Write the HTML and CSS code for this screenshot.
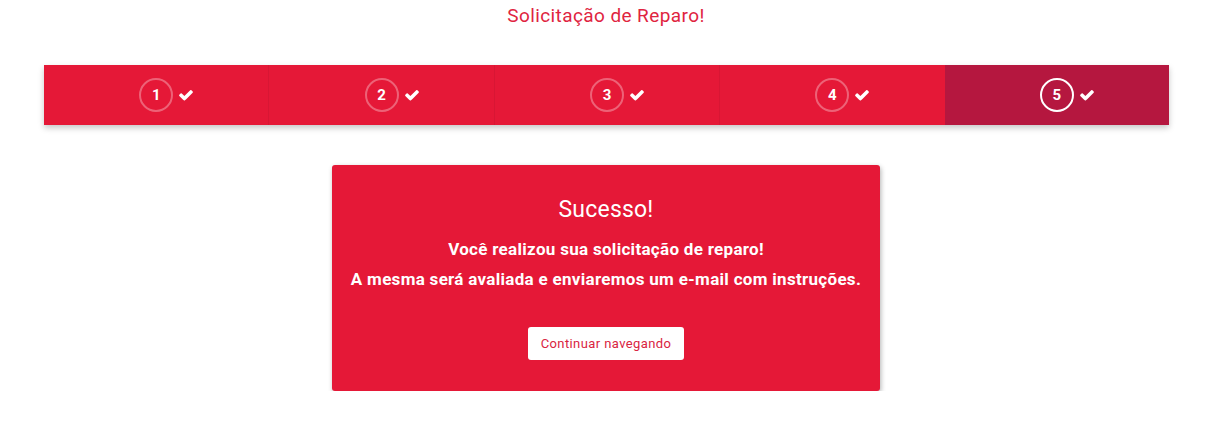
FILE: index.html
```html
<!DOCTYPE html>
<html lang="pt">
<head>
<meta charset="utf-8">
<link rel="stylesheet" href="styles.css">
</head>
<body>
<div class="page">
<h1 class="page-title">Solicitação de Reparo!</h1>
<div class="stepper">
  <div class="step done"><span class="num">1</span><svg class="check" viewBox="0 0 1792 1792"><path d="M1671 566q0 40-28 68l-724 724-136 136q-28 28-68 28t-68-28l-136-136-362-362q-28-28-28-68t28-68l136-136q28-28 68-28t68 28l294 295 656-657q28-28 68-28t68 28l136 136q28 28 28 68z"/></svg></div>
  <div class="step done"><span class="num">2</span><svg class="check" viewBox="0 0 1792 1792"><path d="M1671 566q0 40-28 68l-724 724-136 136q-28 28-68 28t-68-28l-136-136-362-362q-28-28-28-68t28-68l136-136q28-28 68-28t68 28l294 295 656-657q28-28 68-28t68 28l136 136q28 28 28 68z"/></svg></div>
  <div class="step done"><span class="num">3</span><svg class="check" viewBox="0 0 1792 1792"><path d="M1671 566q0 40-28 68l-724 724-136 136q-28 28-68 28t-68-28l-136-136-362-362q-28-28-28-68t28-68l136-136q28-28 68-28t68 28l294 295 656-657q28-28 68-28t68 28l136 136q28 28 28 68z"/></svg></div>
  <div class="step done"><span class="num">4</span><svg class="check" viewBox="0 0 1792 1792"><path d="M1671 566q0 40-28 68l-724 724-136 136q-28 28-68 28t-68-28l-136-136-362-362q-28-28-28-68t28-68l136-136q28-28 68-28t68 28l294 295 656-657q28-28 68-28t68 28l136 136q28 28 28 68z"/></svg></div>
  <div class="step active"><span class="num">5</span><svg class="check" viewBox="0 0 1792 1792"><path d="M1671 566q0 40-28 68l-724 724-136 136q-28 28-68 28t-68-28l-136-136-362-362q-28-28-28-68t28-68l136-136q28-28 68-28t68 28l294 295 656-657q28-28 68-28t68 28l136 136q28 28 28 68z"/></svg></div>
</div>
<div class="card">
  <h2 class="card-title">Sucesso!</h2>
  <p class="card-text">Você realizou sua solicitação de reparo!</p>
  <p class="card-text">A mesma será avaliada e enviaremos um e-mail com instruções.</p>
  <button class="btn">Continuar navegando</button>
</div>
</div>
</body>
</html>
```
FILE: styles.css
```css
* { box-sizing: border-box; }
body {
  margin: 0;
  background: #fff;
  font-family: Roboto, "Liberation Sans", sans-serif;
}
.page {
  padding: 0 0 0 5px;
}
.page-title {
  margin: 0;
  padding-top: 4px;
  height: 65px;
  text-align: center;
  font-weight: 400;
  font-size: 19px;
  letter-spacing: 0.4px;
  line-height: 24px;
  color: #e0243f;
}
.stepper {
  margin: 0 38px 0 39px;
  display: flex;
  height: 60px;
  box-shadow: 0 3px 6px rgba(0,0,0,0.22);
}
.step {
  flex: 1;
  display: grid;
  grid-template-columns: 1fr auto 1fr;
  align-items: center;
  column-gap: 5px;
  background: #e51837;
  border-right: 1px solid #d81634;
}
.step:nth-child(4) { border-right: none; }
.step.active { background: #b5173f; border-right: none; }
.num {
  grid-column: 2;
  width: 34px;
  height: 34px;
  border-radius: 50%;
  border: 2px solid rgba(255,255,255,0.32);
  color: #fff;
  font-weight: 700;
  font-size: 15px;
  display: flex;
  align-items: center;
  justify-content: center;
}
.step.active .num { border-color: #fff; }
.check {
  grid-column: 3;
  width: 16px;
  height: 16px;
  fill: #fff;
}
.card {
  width: 548px;
  margin: 40px auto 0;
  background: #e51837;
  border-radius: 3px;
  box-shadow: 1px 2px 5px rgba(0,0,0,0.3);
  padding: 30px 0 31px;
  text-align: center;
  color: #fff;
}
.card-title {
  margin: 0 0 9px;
  font-weight: 400;
  font-size: 23px;
  letter-spacing: 0.2px;
  line-height: 30px;
}
.card-text {
  margin: 0;
  font-weight: 700;
  font-size: 17px;
  letter-spacing: 0.3px;
  line-height: 30px;
}
.btn {
  margin-top: 33px;
  background: #fff;
  border: none;
  border-radius: 3px;
  height: 33px;
  padding: 0 13px;
  font-family: inherit;
  font-size: 13px;
  letter-spacing: 0.4px;
  color: #d9243f;
}
```
